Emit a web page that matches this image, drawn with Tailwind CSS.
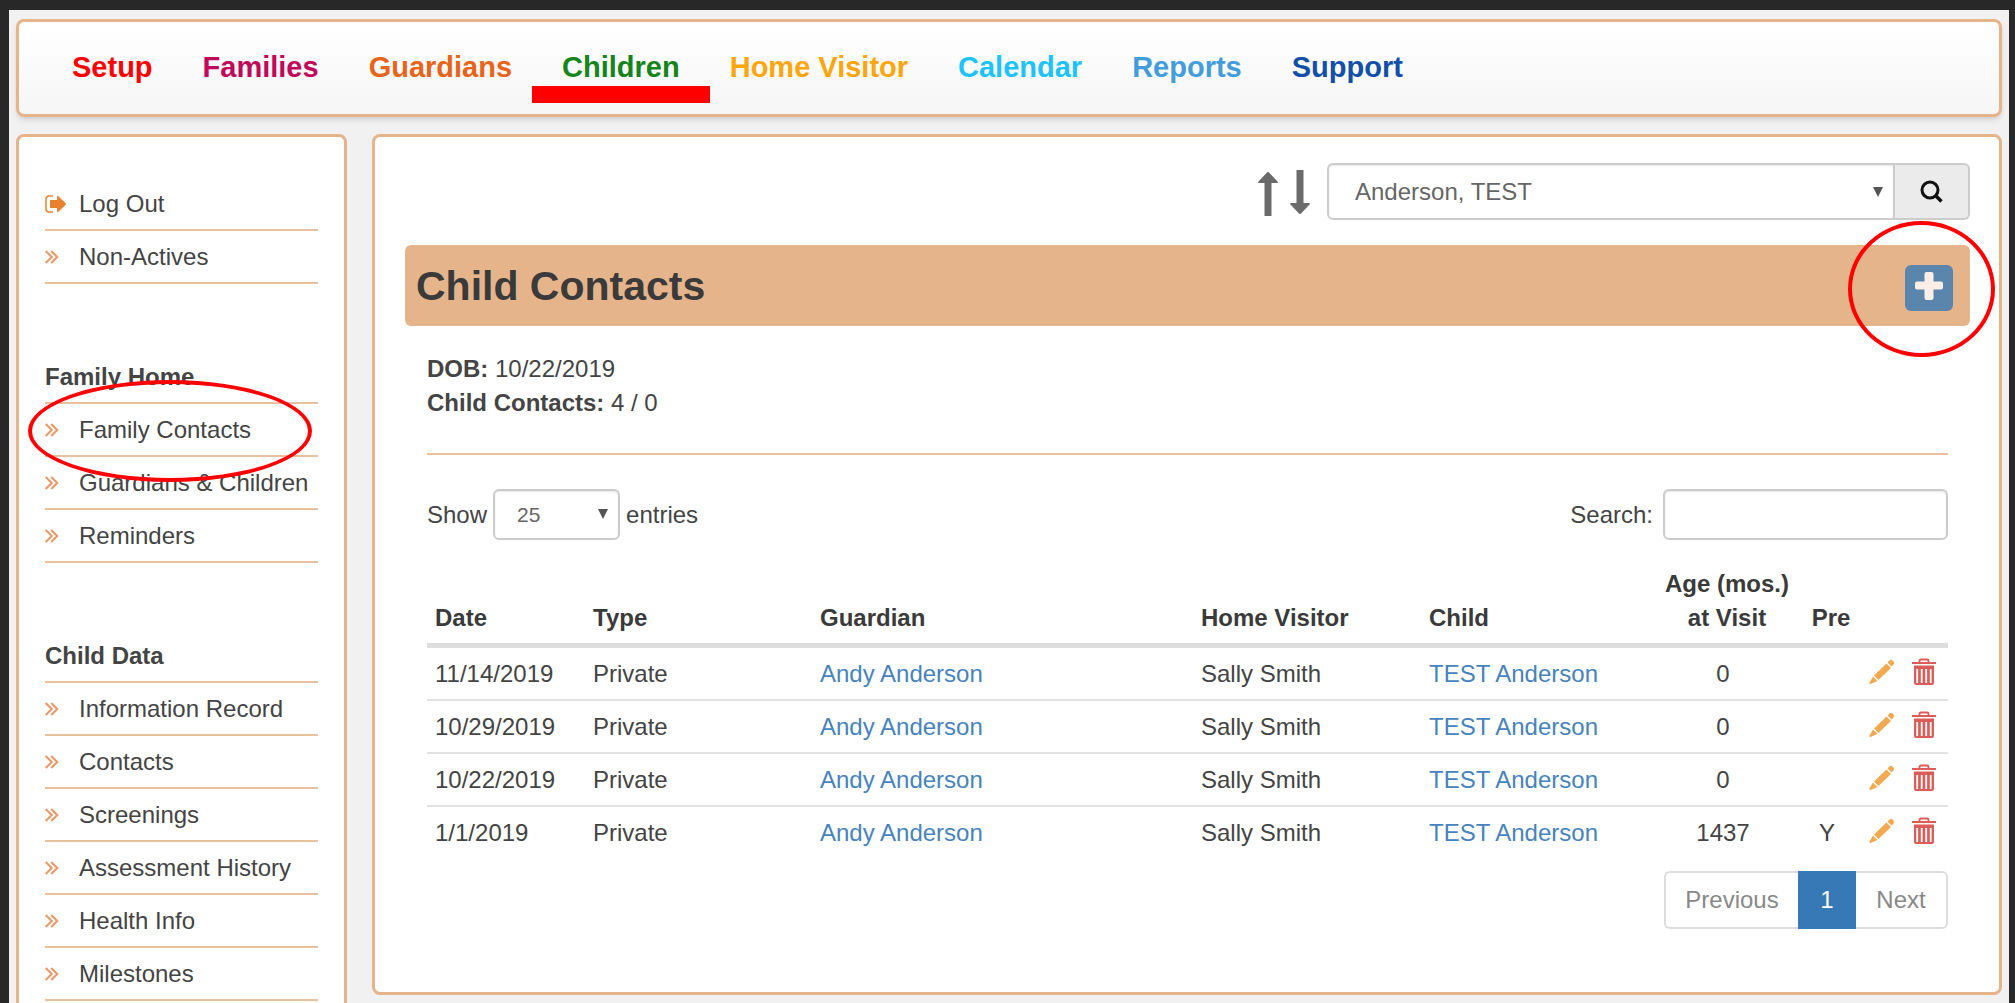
<!DOCTYPE html>
<html lang="en">
<head>
<meta charset="utf-8">
<title>Child Contacts</title>
<script src="https://cdn.jsdelivr.net/npm/@tailwindcss/browser@4"></script>
</head>
<body class="flex h-screen flex-col overflow-hidden bg-[#282828] pt-2.5 pr-1.5 pl-[9px] font-['Liberation_Sans',Arial,sans-serif] text-2xl leading-[34px] text-[#444]">
<svg class="hidden" xmlns="http://www.w3.org/2000/svg">
  <symbol id="chev" viewBox="0 0 14 14"><path d="M.7 1l6 6-6 6M6.200 1l6 6-6 6" fill="none" stroke="currentColor" stroke-width="2.200"/></symbol>
  <symbol id="exit" viewBox="0 0 22 18"><path d="M8 1H4a3 3 0 0 0-3 3v10a3 3 0 0 0 3 3h4" fill="none" stroke="currentColor" stroke-width="1.500"/><path d="M5 5h7V1.500q0-1 1-.5l7.500 7q1 1 0 2l-7.500 7q-1 .5-1-.5V13H5z" fill="currentColor"/></symbol>
  <symbol id="pencil" viewBox="0 0 26 26"><path d="M20.500 1.500q1.500-1.500 3 0l1 1q1.500 1.500 0 3l-2 2-4-4zM17.500 4.500l4.500 4.500L9.500 21l-4.500-4.500zM4 17.500l4.500 4.500-7 3q-1.500 0-1-1.500z" fill="currentColor"/></symbol>
  <symbol id="trash" viewBox="0 0 24 27"><path d="M7.500 5V3q0-1.500 1.500-1.500h6q1.500 0 1.500 1.500v2" fill="none" stroke="currentColor" stroke-width="1.800"/><path d="M0 4h24v2H0zM2 7.500h20V25q0 2-2 2H4q-2 0-2-2zM4.300 11v14h1.800V11zm4.500 0v14h1.800V11zm4.500 0v14h1.800V11zm4.500 0v14h1.800V11z" fill="currentColor" fill-rule="evenodd"/></symbol>
  <symbol id="caret" viewBox="0 0 10 10"><path d="M0 0h10L5 10z" fill="currentColor"/></symbol>
</svg>
<div class="flex min-h-0 grow flex-col bg-[#f1f1f1] px-[7px] pt-[9px]">
  <header class="h-[98px] shrink-0 rounded-lg border-3 border-[#e5b48b] bg-linear-to-b from-white to-[#f6f6f6] shadow-md">
    <nav class="flex h-full items-start gap-[50px] pt-7 pl-[53px] text-[29px] font-bold">
      <a href="#" class="text-[#f00]">Setup</a>
      <a href="#" class="text-[#c2085a]">Families</a>
      <a href="#" class="text-[#e8641b]">Guardians</a>
      <a href="#" class="relative text-[#15841a]">Children<span class="absolute -inset-x-[30px] top-9 h-[17px] bg-[#f00]"></span></a>
      <a href="#" class="text-[#ffa60f]">Home Visitor</a>
      <a href="#" class="text-[#1cc3ff]">Calendar</a>
      <a href="#" class="text-[#439cdb]">Reports</a>
      <a href="#" class="text-[#124fa8]">Support</a>
    </nav>
  </header>
  <div class="mt-[17px] flex min-h-0 grow items-start gap-[25px]">
    <aside class="w-[331px] shrink-0 rounded-lg border-3 border-[#e5b48b] bg-white px-[26px] pt-[41px] pb-10">
      <ul>
        <li class="border-b-2 border-[#ebc19d]"><a href="#" class="flex h-[51px] items-center"><svg class="mr-3 h-[18px] w-[22px] text-[#e8812e]"><use href="#exit"/></svg>Log Out</a></li>
        <li class="border-b-2 border-[#ebc19d]"><a href="#" class="flex h-[51px] items-center"><svg class="mr-5 size-3.5 text-[#eb9a6b]"><use href="#chev"/></svg>Non-Actives</a></li>
      </ul>
      <h2 class="mt-[67px] flex h-[51px] items-center font-bold">Family Home</h2>
      <ul class="border-t-2 border-[#ebc19d]">
        <li class="relative border-b-2 border-[#ebc19d]"><a href="#" class="flex h-[51px] items-center"><svg class="mr-5 size-3.5 text-[#eb9a6b]"><use href="#chev"/></svg>Family Contacts</a><span class="absolute -top-6 -left-[17px] z-10 h-[102px] w-[284px] rounded-[50%] border-4 border-[#f00]"></span></li>
        <li class="border-b-2 border-[#ebc19d]"><a href="#" class="flex h-[51px] items-center"><svg class="mr-5 size-3.5 text-[#eb9a6b]"><use href="#chev"/></svg>Guardians &amp; Children</a></li>
        <li class="border-b-2 border-[#ebc19d]"><a href="#" class="flex h-[51px] items-center"><svg class="mr-5 size-3.5 text-[#eb9a6b]"><use href="#chev"/></svg>Reminders</a></li>
      </ul>
      <h2 class="mt-[67px] flex h-[51px] items-center font-bold">Child Data</h2>
      <ul class="border-t-2 border-[#ebc19d]">
        <li class="border-b-2 border-[#ebc19d]"><a href="#" class="flex h-[51px] items-center"><svg class="mr-5 size-3.5 text-[#eb9a6b]"><use href="#chev"/></svg>Information Record</a></li>
        <li class="border-b-2 border-[#ebc19d]"><a href="#" class="flex h-[51px] items-center"><svg class="mr-5 size-3.5 text-[#eb9a6b]"><use href="#chev"/></svg>Contacts</a></li>
        <li class="border-b-2 border-[#ebc19d]"><a href="#" class="flex h-[51px] items-center"><svg class="mr-5 size-3.5 text-[#eb9a6b]"><use href="#chev"/></svg>Screenings</a></li>
        <li class="border-b-2 border-[#ebc19d]"><a href="#" class="flex h-[51px] items-center"><svg class="mr-5 size-3.5 text-[#eb9a6b]"><use href="#chev"/></svg>Assessment History</a></li>
        <li class="border-b-2 border-[#ebc19d]"><a href="#" class="flex h-[51px] items-center"><svg class="mr-5 size-3.5 text-[#eb9a6b]"><use href="#chev"/></svg>Health Info</a></li>
        <li class="border-b-2 border-[#ebc19d]"><a href="#" class="flex h-[51px] items-center"><svg class="mr-5 size-3.5 text-[#eb9a6b]"><use href="#chev"/></svg>Milestones</a></li>
      </ul>
    </aside>
    <main class="min-w-0 grow rounded-lg border-3 border-[#e5b48b] bg-white pt-[26px] pr-[29px] pb-[63px] pl-[30px]">
      <div class="flex items-center justify-end">
        <button class="mr-3 pt-1" aria-label="Sort ascending"><svg class="h-11 w-5" viewBox="0 0 20 44"><path d="M10 0q1 0 1.500 1L20 10q0 1-1 1h-5.500v33h-7V11H1q-1 0-1-1L8.500 1Q9 0 10 0z" fill="#6b6b6b"/></svg></button>
        <button class="mr-[17px]" aria-label="Sort descending"><svg class="h-11 w-5" viewBox="0 0 20 44"><path d="M10 44q1 0 1.500-1L20 34q0-1-1-1h-5.500V0h-7v33H1q-1 0-1 1l8.500 9q.5 1 1.500 1z" fill="#6b6b6b"/></svg></button>
        <div class="relative w-[568px]">
          <select aria-label="Child" class="block h-[57px] w-full appearance-none rounded-l-md border-2 border-[#ccc] bg-white pl-[26px] text-2xl text-[#666] shadow-[inset_0_1px_2px_rgba(0,0,0,0.1)]"><option>Anderson, TEST</option></select>
          <svg class="pointer-events-none absolute top-6 right-3 size-2.5 text-[#555]"><use href="#caret"/></svg>
        </div>
        <button aria-label="Search children" class="flex h-[57px] w-[75px] items-center justify-center rounded-r-md border-2 border-l-0 border-[#ccc] bg-[#ebebeb]"><svg class="size-[23px]" viewBox="0 0 23 23" fill="none" stroke="#111"><circle cx="10" cy="10" r="8" stroke-width="3"/><path d="M15.500 15.500l6 6" stroke-width="3.500"/></svg></button>
      </div>
      <div class="mt-[25px] flex h-[81px] items-center justify-between rounded-md bg-[#e5b48b] pr-[17px] pl-[11px]">
        <h1 class="text-[41px] font-bold text-[#3a3a3a]">Child Contacts</h1>
        <div class="relative mt-1">
          <button aria-label="Add contact" class="flex h-[46px] w-12 justify-center rounded-md bg-[#5a86ae] pt-[7px]"><svg class="size-7" viewBox="0 0 28 28"><path d="M11.500 0h5q2 0 2 2v7.500H26q2 0 2 2v4q0 2-2 2h-7.500V26q0 2-2 2h-5q-2 0-2-2v-8.500H2q-2 0-2-2v-4q0-2 2-2h7.500V2q0-2 2-2z" fill="#fbeee6"/></svg></button>
          <span class="pointer-events-none absolute -top-11 -left-[57px] h-[136px] w-[147px] rounded-[50%] border-4 border-[#f00]"></span>
        </div>
      </div>
      <div class="mt-[26px] px-[22px]">
        <p><b>DOB:</b> 10/22/2019</p>
        <p><b>Child Contacts:</b> 4 / 0</p>
        <hr class="mt-[33px] border-t-2 border-[#ebc19d]">
        <div class="mt-[34px] flex items-center justify-between">
          <label class="flex items-center gap-1.5">Show
            <span class="relative"><select class="block h-[51px] w-[127px] appearance-none rounded-md border-2 border-[#ccc] bg-white pl-[22px] text-[21px] text-[#666] shadow-[inset_0_1px_2px_rgba(0,0,0,0.1)]"><option>25</option></select><svg class="pointer-events-none absolute top-5 right-3 size-2.5 text-[#555]"><use href="#caret"/></svg></span>
            entries</label>
          <label class="flex items-center gap-2.5">Search: <input type="search" class="h-[51px] w-[285px] rounded-md border-2 border-[#ccc] bg-white px-4 text-[21px] shadow-[inset_0_1px_2px_rgba(0,0,0,0.1)]"></label>
        </div>
        <table class="mt-[19px] w-full table-fixed border-separate border-spacing-0">
          <colgroup><col class="w-[158px]"><col class="w-[227px]"><col><col class="w-[228px]"><col class="w-[234px]"><col class="w-[136px]"><col class="w-[72px]"><col class="w-[85px]"></colgroup>
          <thead class="text-left align-bottom text-[#3a3a3a]">
            <tr class="*:border-b-5 *:border-[#ddd] *:py-2">
              <th class="pl-2">Date</th><th class="pl-2">Type</th><th class="pl-2">Guardian</th><th class="pl-2">Home Visitor</th><th class="pl-2">Child</th><th class="pl-2 text-center">Age (mos.)<br>at Visit</th><th class="pl-2 text-center">Pre</th><th aria-label="Actions"></th>
            </tr>
          </thead>
          <tbody>
            <tr class="h-[53px] *:border-b-2 *:border-[#e2e2e2]">
              <td class="pl-2">11/14/2019</td><td class="pl-2">Private</td><td class="pl-2"><a href="#" class="text-[#4783bd]">Andy Anderson</a></td><td class="pl-2">Sally Smith</td><td class="pl-2"><a href="#" class="text-[#4783bd]">TEST Anderson</a></td><td class="text-center">0</td><td></td>
              <td><div class="flex gap-[17px] pb-1 pl-1.5"><button aria-label="Edit"><svg class="size-[26px] text-[#f3a951]"><use href="#pencil"/></svg></button><button aria-label="Delete"><svg class="h-[27px] w-6 text-[#db5c58]"><use href="#trash"/></svg></button></div></td>
            </tr>
            <tr class="h-[53px] *:border-b-2 *:border-[#e2e2e2]">
              <td class="pl-2">10/29/2019</td><td class="pl-2">Private</td><td class="pl-2"><a href="#" class="text-[#4783bd]">Andy Anderson</a></td><td class="pl-2">Sally Smith</td><td class="pl-2"><a href="#" class="text-[#4783bd]">TEST Anderson</a></td><td class="text-center">0</td><td></td>
              <td><div class="flex gap-[17px] pb-1 pl-1.5"><button aria-label="Edit"><svg class="size-[26px] text-[#f3a951]"><use href="#pencil"/></svg></button><button aria-label="Delete"><svg class="h-[27px] w-6 text-[#db5c58]"><use href="#trash"/></svg></button></div></td>
            </tr>
            <tr class="h-[53px] *:border-b-2 *:border-[#e2e2e2]">
              <td class="pl-2">10/22/2019</td><td class="pl-2">Private</td><td class="pl-2"><a href="#" class="text-[#4783bd]">Andy Anderson</a></td><td class="pl-2">Sally Smith</td><td class="pl-2"><a href="#" class="text-[#4783bd]">TEST Anderson</a></td><td class="text-center">0</td><td></td>
              <td><div class="flex gap-[17px] pb-1 pl-1.5"><button aria-label="Edit"><svg class="size-[26px] text-[#f3a951]"><use href="#pencil"/></svg></button><button aria-label="Delete"><svg class="h-[27px] w-6 text-[#db5c58]"><use href="#trash"/></svg></button></div></td>
            </tr>
            <tr class="h-[51px]">
              <td class="pl-2">1/1/2019</td><td class="pl-2">Private</td><td class="pl-2"><a href="#" class="text-[#4783bd]">Andy Anderson</a></td><td class="pl-2">Sally Smith</td><td class="pl-2"><a href="#" class="text-[#4783bd]">TEST Anderson</a></td><td class="text-center">1437</td><td class="text-center">Y</td>
              <td><div class="flex gap-[17px] pb-1 pl-1.5"><button aria-label="Edit"><svg class="size-[26px] text-[#f3a951]"><use href="#pencil"/></svg></button><button aria-label="Delete"><svg class="h-[27px] w-6 text-[#db5c58]"><use href="#trash"/></svg></button></div></td>
            </tr>
          </tbody>
        </table>
        <nav class="mt-[13px] flex h-[58px] justify-end" aria-label="Pages">
          <button class="w-[134px] rounded-l-md border-2 border-r-0 border-[#ddd] text-[#888]">Previous</button>
          <button class="w-[58px] bg-[#3779b7] text-white" aria-current="page">1</button>
          <button class="w-[92px] rounded-r-md border-2 border-l-0 border-[#ddd] text-[#888]">Next</button>
        </nav>
      </div>
    </main>
  </div>
</div>
</body>
</html>
